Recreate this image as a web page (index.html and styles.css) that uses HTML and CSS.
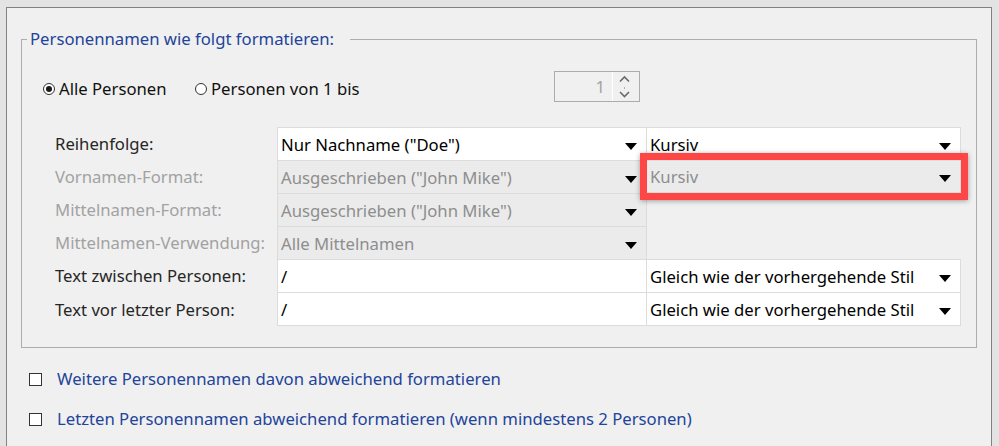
FILE: index.html
```html
<!DOCTYPE html>
<html lang="de">
<head>
<meta charset="utf-8">
<title>Personennamen formatieren</title>
<link rel="stylesheet" href="styles.css">
</head>
<body>
<div class="panel">
  <fieldset class="group">
    <legend>Personennamen wie folgt formatieren:</legend>
    <div class="scope">
      <label class="radio"><span class="dot on"></span>Alle Personen</label>
      <label class="radio"><span class="dot"></span>Personen von 1 bis</label>
      <div class="spin">
        <span class="spin-val">1</span>
        <span class="spin-btns">
          <svg width="25" height="29" viewBox="0 0 25 29">
            <polyline points="7,9.5 11.5,5 16,9.5" fill="none" stroke="#6a6a6a" stroke-width="1.6"/>
            <rect x="11" y="15.5" width="1" height="1" fill="#6a6a6a"/>
            <polyline points="7,20 11.5,24.5 16,20" fill="none" stroke="#6a6a6a" stroke-width="1.6"/>
          </svg>
        </span>
      </div>
    </div>
    <div class="grid">
      <div class="lbl">Reihenfolge:</div>
      <div class="cell c2"><span>Nur Nachname ("Doe")</span><i class="arrow"></i></div>
      <div class="cell c3"><span>Kursiv</span><i class="arrow"></i></div>

      <div class="lbl dis">Vornamen-Format:</div>
      <div class="cell c2 dis"><span>Ausgeschrieben ("John Mike")</span><i class="arrow"></i></div>
      <div class="cell c3 dis hl"><span>Kursiv</span><i class="arrow"></i><span class="mark"></span></div>

      <div class="lbl dis">Mittelnamen-Format:</div>
      <div class="cell c2 dis"><span>Ausgeschrieben ("John Mike")</span><i class="arrow"></i></div>
      <div class="none"></div>

      <div class="lbl dis">Mittelnamen-Verwendung:</div>
      <div class="cell c2 dis"><span>Alle Mittelnamen</span><i class="arrow"></i></div>
      <div class="none"></div>

      <div class="lbl">Text zwischen Personen:</div>
      <div class="cell c2"><span>/</span></div>
      <div class="cell c3"><span>Gleich wie der vorhergehende Stil</span><i class="arrow"></i></div>

      <div class="lbl">Text vor letzter Person:</div>
      <div class="cell c2 end"><span>/</span></div>
      <div class="cell c3 end"><span>Gleich wie der vorhergehende Stil</span><i class="arrow"></i></div>
    </div>
  </fieldset>
  <div class="checks">
    <label class="check"><span class="box"></span>Weitere Personennamen davon abweichend formatieren</label>
    <label class="check"><span class="box"></span>Letzten Personennamen abweichend formatieren (wenn mindestens 2 Personen)</label>
  </div>
</div>
</body>
</html>
```
FILE: styles.css
```css
html, body {
  margin: 0;
  height: 446px;
  overflow: hidden;
}
body {
  background: #e3e3e3;
  font-family: "Noto Sans", "Open Sans", sans-serif;
  font-size: 16.7px;
  color: #1a1a1a;
}
.panel {
  margin: 7px 0 0 6px;
  width: 986px;
  height: 439px;
  box-sizing: border-box;
  border: 1px solid #828282;
  border-bottom: none;
  background: #f0f0f0;
}
.group {
  margin: 20px 0 0 14px;
  width: 956px;
  box-sizing: border-box;
  border: 1px solid #adadad;
  padding: 0 0 21px 0;
  min-width: 0;
}
.group legend {
  margin-left: 5px;
  padding: 0 16px 0 3px;
  height: 22px;
  line-height: 22px;
  color: #23449a;
}
.scope {
  display: grid;
  grid-template-columns: 152px 359px 86px;
  margin-top: 21px;
  padding-left: 21px;
  height: 31px;
}
.radio {
  display: flex;
  align-items: center;
  margin-top: 7px;
  height: 22px;
  line-height: 22px;
  color: #111;
}
.dot {
  width: 12px;
  height: 12px;
  box-sizing: border-box;
  border: 1px solid #333;
  border-radius: 50%;
  background: #fff;
  margin-right: 4px;
  display: flex;
  align-items: center;
  justify-content: center;
}
.dot.on::after {
  content: "";
  width: 6px;
  height: 6px;
  border-radius: 50%;
  background: #1a1a1a;
}
.spin {
  display: flex;
  width: 86px;
  height: 31px;
  box-sizing: border-box;
  border: 1px solid #acacac;
  background: #f0f0f0;
}
.spin-val {
  flex: 0 0 58px;
  box-sizing: border-box;
  padding-right: 7px;
  text-align: right;
  line-height: 29px;
  color: #a3a3a3;
  border-right: 1px solid #fff;
}
.spin-btns {
  flex: 1;
  display: flex;
}
.grid {
  display: grid;
  grid-template-columns: 222px 370px 314px;
  grid-template-rows: repeat(5, 33px) 34px;
  margin: 25px 0 0 33px;
}
.lbl {
  display: flex;
  align-items: center;
  white-space: nowrap;
  color: #262626;
}
.lbl.dis {
  color: #a2a2a2;
}
.cell {
  display: flex;
  align-items: center;
  justify-content: space-between;
  box-sizing: border-box;
  padding: 0 9px 0 3px;
  background: #fff;
  color: #000;
  border-top: 1px solid #dcdcdc;
  border-right: 1px solid #dcdcdc;
  white-space: nowrap;
}
.c2 {
  border-left: 1px solid #dcdcdc;
}
.cell.dis {
  background: #ebebeb;
  color: #8e8e8e;
}
.cell.end {
  border-bottom: 1px solid #dcdcdc;
}
.hl {
  position: relative;
  border-bottom: 1px solid #dcdcdc;
}
.arrow {
  width: 0;
  height: 0;
  margin-top: 4px;
  border-left: 6px solid transparent;
  border-right: 6px solid transparent;
  border-top: 7px solid #000;
}
.mark {
  position: absolute;
  left: -7px;
  top: -8px;
  right: -8px;
  bottom: -8px;
  border: 7px solid #ff4646;
  box-shadow: 0 1px 5px rgba(0, 0, 0, 0.35);
  pointer-events: none;
}
.checks {
  display: flex;
  flex-direction: column;
  gap: 18px;
  padding: 20px 0 0 22px;
}
.check {
  display: flex;
  align-items: center;
  height: 22px;
  line-height: 22px;
  color: #23449a;
}
.box {
  width: 13px;
  height: 13px;
  box-sizing: border-box;
  border: 1px solid #333;
  background: #fff;
  margin-right: 15px;
}
```
